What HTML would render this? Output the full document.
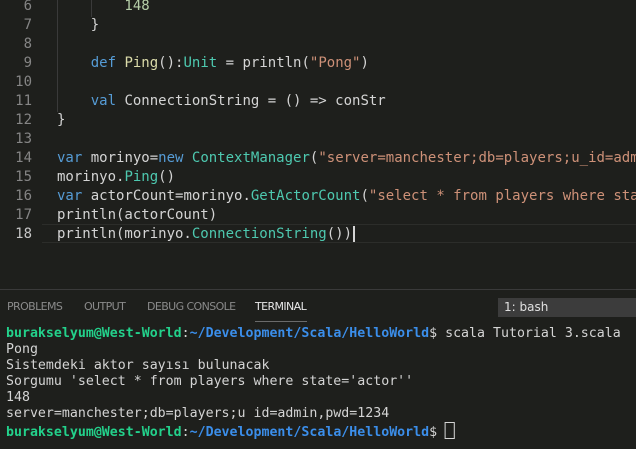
<!DOCTYPE html>
<html><head><meta charset="utf-8"><style>
body{margin:0;width:636px;height:449px;background:#1e1f1c;overflow:hidden;position:relative;font-family:"DejaVu Sans Mono","Liberation Mono",monospace}
.ln{position:absolute;left:0;width:32px;text-align:right;color:#858585;font-size:14px;line-height:19px}
.code{position:absolute;left:57px;font-size:14px;line-height:19px;color:#d4d4d4;white-space:pre}
.k{color:#569cd6}.t{color:#4ec9b0}.s{color:#ce9178}.n{color:#b5cea8}
.cur{position:absolute;left:42px;right:0;top:224px;height:17px;border-top:1px solid #2c2d2a;border-bottom:1px solid #2c2d2a}
.guide{position:absolute;width:1px;background:#3a3a3a}
.panel{position:absolute;left:0;top:289px;width:636px;height:1px;background:#3a3a3a}
.tab{position:absolute;top:300px;font-family:"DejaVu Sans","Liberation Sans",sans-serif;font-size:11px;color:#8a8a8a;letter-spacing:-0.6px}
.term{position:absolute;left:6px;top:326px;font-family:"DejaVu Sans Mono","Liberation Mono",monospace;font-size:13px;line-height:16px;color:#d4d4d4;white-space:pre;transform:scaleX(1.02);transform-origin:0 0}
.g{color:#23d18b;font-weight:bold}.b{color:#3b8eea;font-weight:bold}
</style></head><body>
<div class="guide" style="left:57px;top:0;height:112px"></div>
<div class="guide" style="left:91px;top:0;height:17px"></div>
<div class="cur"></div>
<div class="ln" style="top:-3px">6<br>7<br>8<br>9<br>10<br>11<br>12<br>13<br>14<br>15<br>16<br>17<br><span style="color:#c6c6c6">18</span></div>
<div class="code" style="top:-3px"><span class="n">        148</span>
    }

    <span class="k">def</span> <span style="color:#dcdcaa">Ping</span>():<span class="t">Unit</span> = println(<span class="s">"Pong"</span>)

    <span class="k">val</span> ConnectionString = () =&gt; conStr
}

<span class="k">var</span> morinyo=<span class="k">new</span> <span class="t">ContextManager</span>(<span class="s">"server=manchester;db=players;u_id=admin"</span>
morinyo.<span class="t">Ping</span>()
<span class="k">var</span> actorCount=morinyo.<span class="t">GetActorCount</span>(<span class="s">"select * from players where state"</span>
println(actorCount)
println(morinyo.<span class="t">ConnectionString</span>())<span style="border-left:2px solid #d4d4d4;margin-left:1px"></span></div>
<div class="panel"></div>
<div class="tab" style="left:7px">PROBLEMS</div>
<div class="tab" style="left:84px">OUTPUT</div>
<div class="tab" style="left:147px">DEBUG CONSOLE</div>
<div class="tab" style="left:255px;color:#e7e7e7">TERMINAL</div>
<div style="position:absolute;left:255px;top:321px;width:52px;height:1px;background:#6a6a6a"></div>
<div style="position:absolute;left:498px;top:298px;width:138px;height:19px;background:#3c3c3c;color:#e0e0e0;font-family:'DejaVu Sans','Liberation Sans',sans-serif;font-size:12px;line-height:19px;padding-left:6px;box-sizing:border-box">1: bash</div>
<div class="term"><span class="g">burakselyum@West-World</span>:<span class="b">~/Development/Scala/HelloWorld</span>$ scala Tutorial 3.scala
Pong
Sistemdeki aktor sayısı bulunacak
Sorgumu 'select * from players where state='actor''
148
server=manchester;db=players;u id=admin,pwd=1234
<span class="g">burakselyum@West-World</span>:<span class="b">~/Development/Scala/HelloWorld</span>$ <span style="display:inline-block;width:8px;height:15px;border:1px solid #d4d4d4;vertical-align:-3px"></span></div>
</body></html>
